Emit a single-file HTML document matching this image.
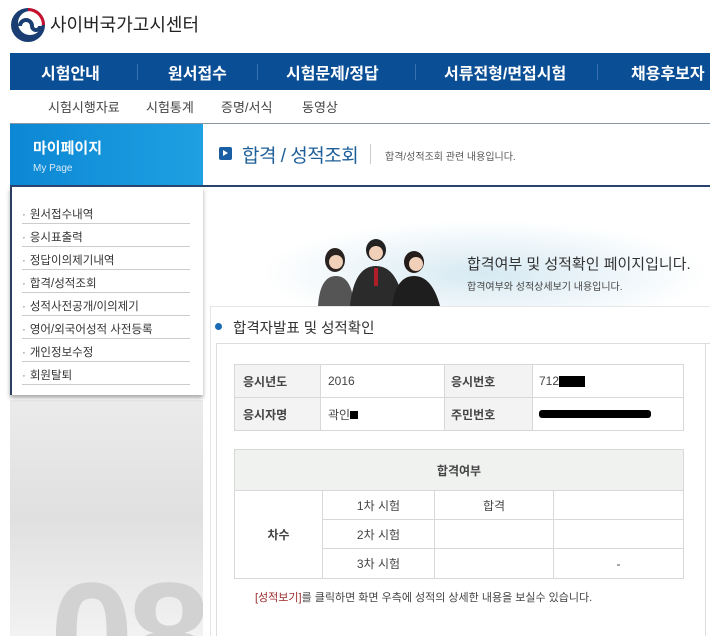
<!DOCTYPE html>
<html><head><meta charset="utf-8"><style>
*{margin:0;padding:0;box-sizing:border-box}
html,body{width:710px;height:636px;overflow:hidden}
body{background:#fff;font-family:"Liberation Sans","Noto Sans CJK KR","NanumGothic",sans-serif;position:relative;color:#333}
.a{position:absolute;white-space:nowrap}
.nav{position:absolute;left:10px;top:53px;width:700px;height:37px;background:#0a4e96}
.nav span{position:absolute;top:7px;color:#fff;font-size:16px;font-weight:bold}
.nav i{position:absolute;top:11px;width:1px;height:16px;background:#3a70ad}
.sub span{position:absolute;top:97px;font-size:13px;color:#444}
.menu div{position:absolute;left:22px;width:168px;height:23px;border-bottom:1px solid #ccc;font-size:11.5px;color:#333;padding-top:5px}
.menu div:before{content:"·";margin-right:4px;color:#777}
table{border-collapse:collapse;position:absolute;font-size:12px}
td{border:1px solid #d8d8d8;color:#444}
</style></head><body>
<svg class="a" style="left:9px;top:6px" width="38" height="38" viewBox="0 0 38 38"><circle cx="19" cy="19" r="17" fill="#1a3e72"/><circle cx="21" cy="17" r="12" fill="#fff"/><path d="M19 2a17 17 0 0 1 17 17h-3a14 14 0 0 0 -14 -14z" fill="#c8102e"/><path d="M11 20a6 6 0 0 1 12 0a4 4 0 0 0 8 0" stroke="#1a3e72" stroke-width="4" fill="none"/></svg>
<div class="a" style="left:50px;top:11px;font-size:18px;color:#222">사이버국가고시센터</div>
<div class="nav">
<span style="left:31px">시험안내</span><i style="left:127px"></i>
<span style="left:158px">원서접수</span><i style="left:247px"></i>
<span style="left:276px">시험문제/정답</span><i style="left:405px"></i>
<span style="left:434px">서류전형/면접시험</span><i style="left:587px"></i>
<span style="left:621px">채용후보자</span>
</div>
<div class="sub"><span style="left:48px">시험시행자료</span><span style="left:146px">시험통계</span><span style="left:221px">증명/서식</span><span style="left:302px">동영상</span></div>
<div class="a" style="left:10px;top:123px;width:700px;height:1px;background:#8a96a8"></div>
<div class="a" style="left:10px;top:124px;width:193px;height:62px;background:linear-gradient(90deg,#0c87d4,#1ea0e2)"></div>
<div class="a" style="left:33px;top:137px;font-size:15px;font-weight:bold;color:#fff">마이페이지</div>
<div class="a" style="left:33px;top:163px;font-size:10px;color:#d8ecf8">My Page</div>
<div class="a" style="left:10px;top:185px;width:700px;height:2px;background:#26446e"></div>
<div class="a" style="left:219px;top:147px;width:13px;height:13px;background:#1a5ea4;border-radius:2px"></div>
<div class="a" style="left:223px;top:150px;width:0;height:0;border-left:5px solid #fff;border-top:3.5px solid transparent;border-bottom:3.5px solid transparent"></div>
<div class="a" style="left:242px;top:141px;font-size:19px;color:#1f5f99;letter-spacing:-0.5px">합격 / 성적조회</div>
<div class="a" style="left:370px;top:144px;width:1px;height:20px;background:#ccc"></div>
<div class="a" style="left:385px;top:148px;font-size:10px;color:#555">합격/성적조회 관련 내용입니다.</div>
<div class="a" style="left:10px;top:400px;width:193px;height:236px;background:linear-gradient(#ebebeb,#e0e0e0 50%,#f2f2f2);overflow:hidden"><div class="a" style="left:40px;top:160px;height:76px;overflow:hidden;font-size:150px;line-height:150px;font-weight:bold;color:#d2d2d2;letter-spacing:-6px">08</div></div>
<div class="a" style="left:10px;top:187px;width:193px;height:208px;border-left:2px solid #2a3f5f;box-shadow:0 3px 4px #aaa;background:#fff"></div>
<div class="menu">
<div style="top:201px">원서접수내역</div><div style="top:224px">응시표출력</div><div style="top:247px">정답이의제기내역</div><div style="top:270px">합격/성적조회</div><div style="top:293px">성적사전공개/이의제기</div><div style="top:316px">영어/외국어성적 사전등록</div><div style="top:339px">개인정보수정</div><div style="top:362px">회원탈퇴</div>
</div>
<div class="a" style="left:260px;top:220px;width:450px;height:90px;background:radial-gradient(ellipse at 50% 60%,#d6e9f2,#fff 70%)"></div>
<svg class="a" style="left:310px;top:238px" width="135" height="68" viewBox="0 0 135 68"><ellipse cx="25" cy="22" rx="10" ry="12" fill="#2a2220"/><circle cx="26" cy="24" r="7" fill="#f0d0b8"/><path d="M8 68q2-30 18-30t18 30z" fill="#555"/><ellipse cx="66" cy="12" rx="10" ry="11" fill="#222"/><circle cx="66" cy="15" r="7" fill="#f0d0b8"/><path d="M40 68q4-40 26-40t28 40z" fill="#2b2b2b"/><rect x="64" y="30" width="4" height="18" fill="#b01e2a"/><ellipse cx="104" cy="24" rx="10" ry="11" fill="#241c1a"/><circle cx="106" cy="26" r="7" fill="#f0d0b8"/><path d="M82 68q4-30 22-30t26 30z" fill="#1e1e1e"/></svg>
<div class="a" style="left:467px;top:253px;font-size:15px;color:#333">합격여부 및 성적확인 페이지입니다.</div>
<div class="a" style="left:467px;top:278px;font-size:10px;color:#444">합격여부와 성적상세보기 내용입니다.</div>
<div class="a" style="left:210px;top:306px;width:500px;height:330px;background:#fff;border-top:1px solid #e6e6e6;border-left:1px solid #e6e6e6"></div>
<div class="a" style="left:215px;top:323px;width:7px;height:7px;border-radius:50%;background:#1a6ab5"></div>
<div class="a" style="left:233px;top:317px;font-size:14.5px;color:#333">합격자발표 및 성적확인</div>
<div class="a" style="left:216px;top:343px;width:494px;height:293px;border:1px solid #ddd;border-right:none;border-bottom:none"></div>
<div class="a" style="left:705px;top:343px;width:1px;height:293px;background:#ddd"></div>
<table style="left:234px;top:364px;width:450px">
<tr style="height:33px"><td style="width:86px;background:#f3f3f3;padding-left:8px;font-weight:bold">응시년도</td><td style="width:124px;padding-left:7px">2016</td><td style="width:88px;background:#f3f3f3;padding-left:6px;font-weight:bold">응시번호</td><td style="padding-left:6px">712<span style="display:inline-block;width:26px;height:11px;background:#000;vertical-align:middle"></span></td></tr>
<tr style="height:33px"><td style="background:#f3f3f3;padding-left:8px;font-weight:bold">응시자명</td><td style="padding-left:7px">곽인<span style="display:inline-block;width:8px;height:8px;background:#000"></span></td><td style="background:#f3f3f3;padding-left:6px;font-weight:bold">주민번호</td><td style="padding-left:6px"><span style="display:inline-block;width:112px;height:8px;background:#000;border-radius:3px"></span></td></tr>
</table>
<table style="left:234px;top:449px;width:450px;text-align:center">
<tr style="height:41px"><td colspan="4" style="background:#f0f2f0;font-weight:bold">합격여부</td></tr>
<tr style="height:29px"><td rowspan="3" style="width:88px;font-weight:bold">차수</td><td style="width:112px">1차 시험</td><td style="width:119px">합격</td><td></td></tr>
<tr style="height:29px"><td>2차 시험</td><td></td><td></td></tr>
<tr style="height:30px"><td>3차 시험</td><td></td><td>-</td></tr>
</table>
<div class="a" style="left:255px;top:589px;font-size:11px;color:#444"><span style="color:#9b2a2a">[성적보기]</span>를 클릭하면 화면 우측에 성적의 상세한 내용을 보실수 있습니다.</div>
</body></html>
